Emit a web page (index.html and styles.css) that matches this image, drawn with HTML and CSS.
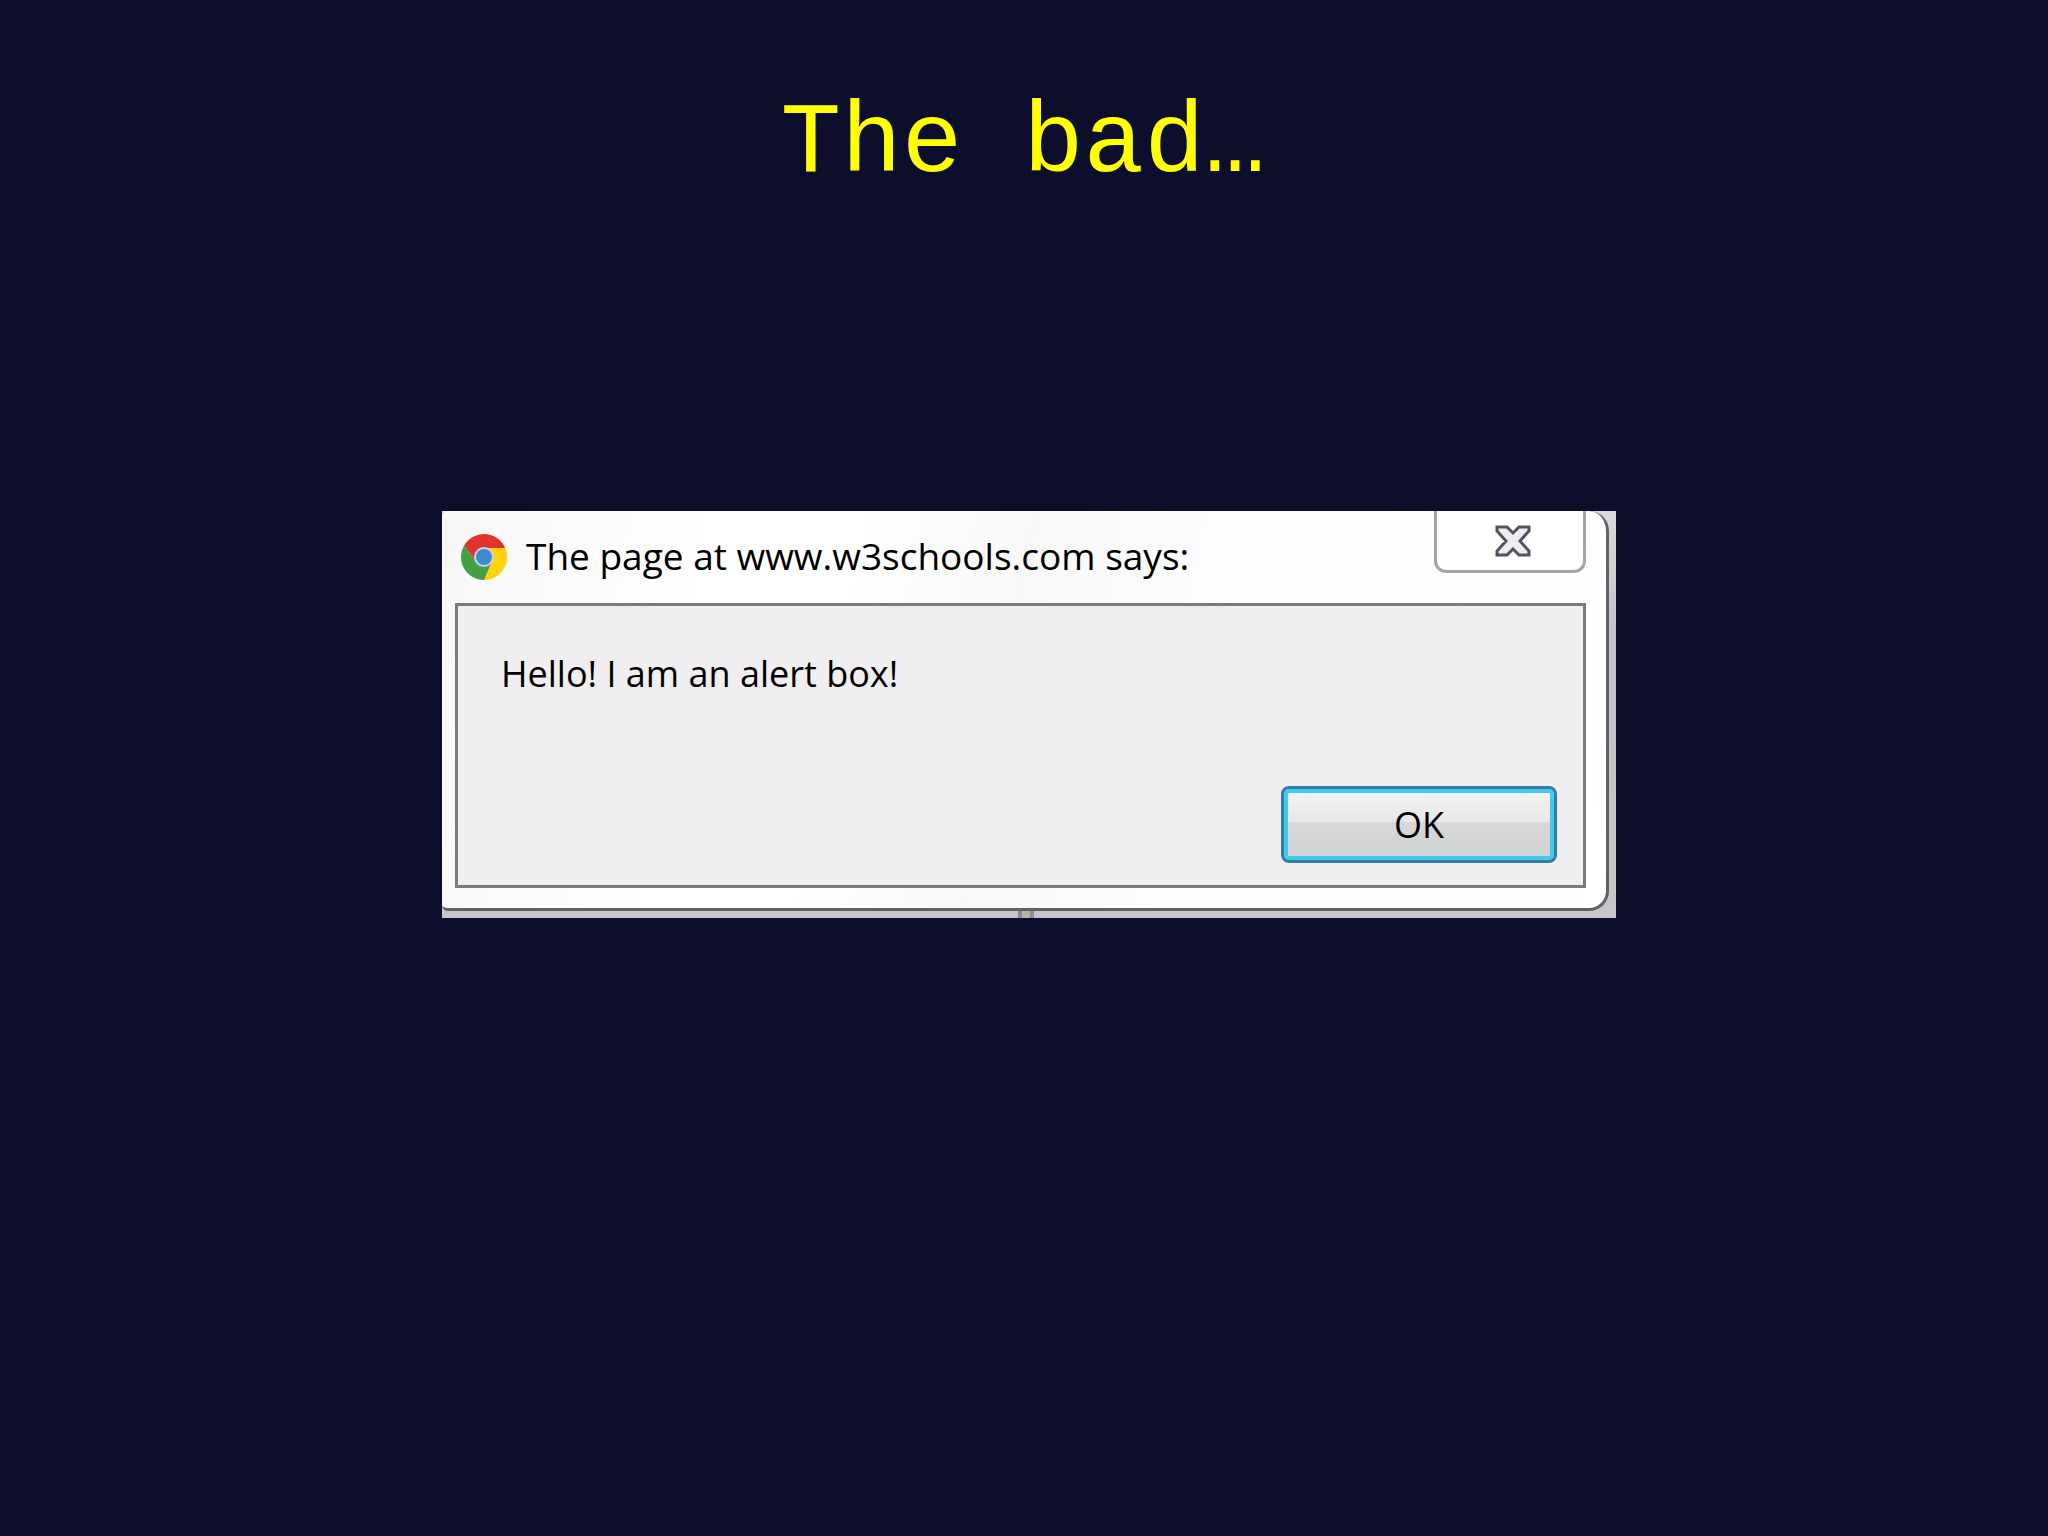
FILE: index.html
```html
<!DOCTYPE html>
<html lang="en">
<head>
  <meta charset="UTF-8">
  <title>The bad…</title>
  <meta name="viewport" content="width=device-width, initial-scale=1.0">
  <link rel="stylesheet" href="styles.css">
</head>
<body>

  <main class="slide">
    <h1 class="slide-title">The bad…</h1>

    <div class="backdrop">
      <section class="alert" role="alertdialog" aria-labelledby="alert-title" aria-describedby="alert-text">
        <header class="titlebar">
          <svg class="logo" viewBox="0 0 48 48" aria-hidden="true">
            <path d="M24 24V15H45.2A23 23 0 0 1 24 47Z" fill="#ffd310"/>
            <path d="M24 24L31.8 28.5L24 47A23 23 0 0 1 4.1 12.5L16.2 28.5Z" fill="#43a047"/>
            <path d="M24 24L16.2 28.5L4.1 12.5A23 23 0 0 1 45.2 15H24Z" fill="#e2342d"/>
            <circle cx="24" cy="24" r="10" fill="#c5d9e8"/>
            <circle cx="24" cy="24" r="8" fill="#4189c9"/>
          </svg>
          <h2 class="alert-title" id="alert-title">The page at www.w3schools.com says:</h2>
          <button class="close" type="button" aria-label="Close">
            <svg class="close-icon" viewBox="0 0 36 32" aria-hidden="true">
              <path d="M2 2H12L18 8L24 2H34V6L25 16L34 26V30H24L18 24L12 30H2V26L11 16L2 6Z" fill="#ececf1" stroke="#53535f" stroke-width="3"/>
            </svg>
          </button>
        </header>

        <div class="content">
          <p class="message" id="alert-text">Hello! I am an alert box!</p>
          <button class="ok" type="button">OK</button>
        </div>
      </section>
      <div class="seam"></div>
    </div>
  </main>

</body>
</html>
```

FILE: styles.css
```css
:root {
  --bg: #0d0e2b;
  --title: #ffff00;
  --panel: #f0eef1;
  --line: #7b7a7d;
  --edge: #626164;
}
* {
  box-sizing: border-box;
}
body {
  margin: 0;
  background: var(--bg);
  font-family: "Open Sans", "Noto Sans", sans-serif;
  font-size: 36px;
  color: #000;
}
h1, h2, p {
  margin: 0;
  font-weight: 400;
}
button {
  padding: 0;
  font: inherit;
  color: inherit;
  cursor: pointer;
}
.slide {
  display: flex;
  flex-direction: column;
  align-items: center;
  gap: 307px;
  min-height: 100vh;
  padding: 84px 0 80px 10px;
}
.slide-title {
  padding-right: 12px;
  font-family: "Courier New", "Liberation Mono", monospace;
  font-size: 101px;
  line-height: 120px;
  color: var(--title);
}

/* grey desktop strip behind the dialog */
.backdrop {
  width: 92%;
  max-width: 1174px;
  padding-right: 7px;
  background: linear-gradient(#d9d9de, #c3c3c9 30%, #c6c6cb);
}
.alert {
  padding: 0 20px 20px 13px;
  background: linear-gradient(100deg, #f7f7f7, #fff 22%, #fff 34%, #f8f8f9 48%, #fefdff 66%, #fff);
  border-right: 3px solid var(--edge);
  border-bottom: 3px solid var(--edge);
  border-radius: 6px 20px 20px 6px;
}
.titlebar {
  display: flex;
  align-items: flex-start;
  height: 92px;
}
.logo {
  width: 48px;
  height: 48px;
  margin: 22px 18px 0 5px;
}
.alert-title {
  flex: 1;
  font-size: 37px;
  line-height: 90px;
}
.close {
  display: flex;
  align-items: center;
  justify-content: center;
  width: 152px;
  height: 62px;
  padding-left: 6px;
  background: #fff;
  border: 3px solid #a5a5a7;
  border-top: 0;
  border-radius: 0 0 12px 12px;
}
.close-icon {
  width: 36px;
  height: 32px;
}
.content {
  display: flex;
  flex-direction: column;
  justify-content: space-between;
  min-height: 285px;
  padding: 44px 26px 22px 43px;
  background: var(--panel);
  border: 3px solid var(--line);
}
.message {
  line-height: 48px;
}
.ok {
  align-self: flex-end;
  width: 276px;
  height: 77px;
  background: linear-gradient(#f4f3f3, #e7e7e7 47%, #d8d8d9 47%, #cdd2d0);
  border: 3px solid #337daa;
  border-radius: 8px;
  box-shadow: inset 0 0 0 4px #43cbee;
}

/* window edge showing under the dialog */
.seam {
  width: 16px;
  height: 7px;
  margin: 0 auto;
  background: #b4b5a4;
  border: solid #8c8c8c;
  border-width: 0 4px;
}
```
